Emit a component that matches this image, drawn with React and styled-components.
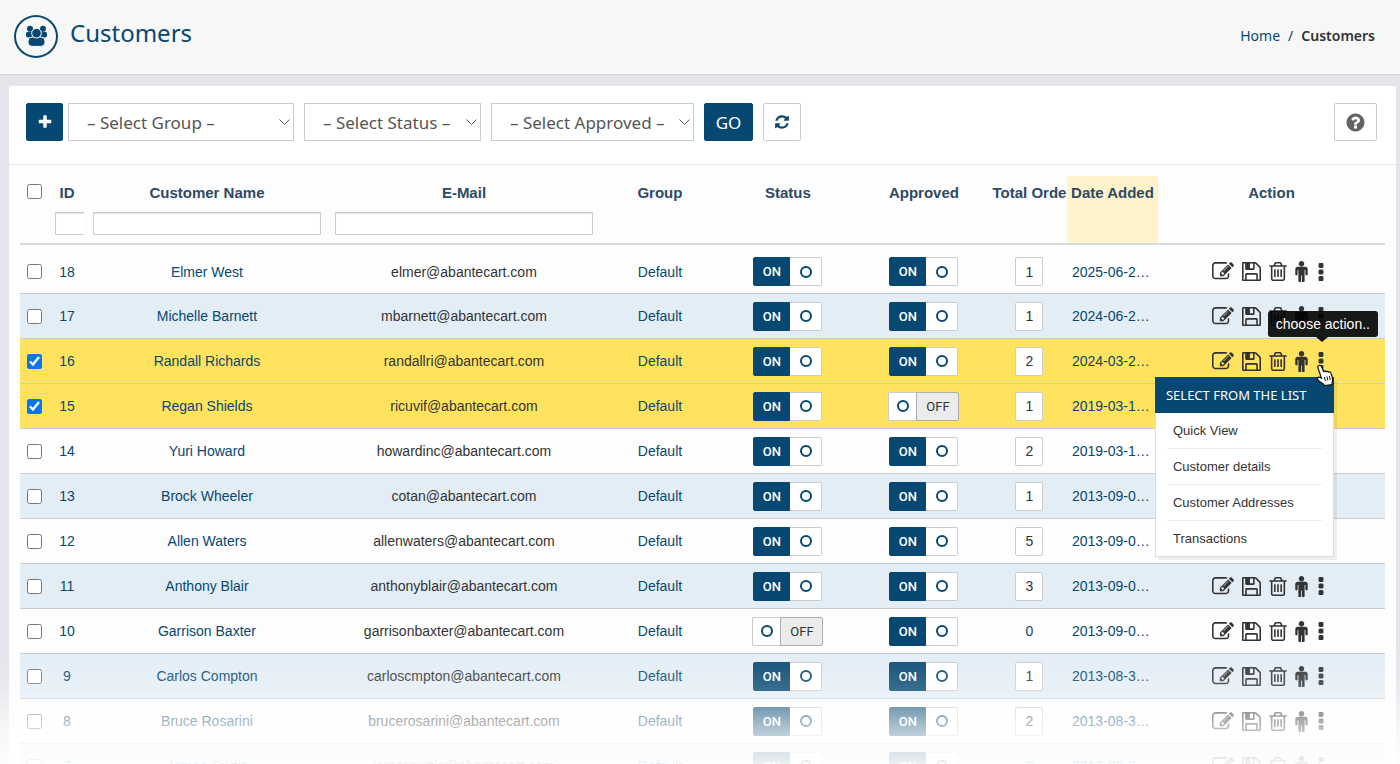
import styled, { createGlobalStyle } from "styled-components";

const uiFont = `"Noto Sans", "Open Sans", sans-serif`;
const tableFont = `"Liberation Sans", Arial, sans-serif`;

const GlobalStyle = createGlobalStyle`
  *, *::before {
    box-sizing: border-box;
  }

  body {
    margin: 0;
    background-color: #e4e5ea;
    color: #333;
    font-family: ${uiFont};
    font-size: 14px;
  }

  button, input, select {
    font: inherit;
    margin: 0;
  }

  a {
    color: #064871;
    text-decoration: none;
  }
`;

const Page = styled.div`
  position: relative;
  height: 100vh;
  overflow: hidden;
`;

const PageFade = styled.div`
  position: absolute;
  left: 0;
  right: 0;
  bottom: 0;
  height: 120px;
  pointer-events: none;
  background: linear-gradient(
    to bottom,
    rgba(255, 255, 255, 0),
    rgba(255, 255, 255, 0.2) 38%,
    rgba(255, 255, 255, 0.44) 52%,
    rgba(255, 255, 255, 0.74) 76%,
    rgba(255, 255, 255, 0.92)
  );
`;

const PageHeader = styled.header`
  height: 75px;
  padding: 0 25px 2px 14px;
  display: flex;
  align-items: center;
  background-color: #f7f7f7;
  border-bottom: 1px solid #d3d5da;
`;

const HeaderIcon = styled.span`
  width: 44px;
  height: 43px;
  display: flex;
  align-items: center;
  justify-content: center;
  color: #064871;
  border: 2px solid #064871;
  border-radius: 50%;
`;

const PageTitle = styled.h1`
  margin: 0 auto 6px 12px;
  color: #064871;
  font-size: 24px;
  font-weight: 400;
  line-height: 32px;
`;

const Breadcrumb = styled.nav`
  display: flex;
  gap: 8px;
  color: #064871;
  font-size: 14px;
  line-height: 20px;
`;

const Crumb = styled.span`
  color: #333;
  font-weight: 600;
`;

const Panel = styled.main`
  margin: 11px 4px 0 9px;
  background-color: #fdfdfd;
  border-radius: 3px;
`;

const Toolbar = styled.form`
  height: 79px;
  padding: 17px 19px 0 17px;
  display: flex;
  align-items: flex-start;
  gap: 10px;
  background-color: #fff;
  border-bottom: 1px solid #eaeaec;
  border-radius: 3px 3px 0 0;
`;

const ToolbarGroup = styled.div`
  display: flex;
  gap: 5px;
`;

const ToolbarButton = styled.button`
  width: ${(props) => props.$width}px;
  height: 38px;
  padding: 0;
  display: flex;
  align-items: center;
  justify-content: center;
  color: ${(props) => (props.$primary ? "#fff" : props.$muted ? "#636363" : "#064871")};
  background-color: ${(props) => (props.$primary ? "#064871" : "#fff")};
  border: 1px solid ${(props) => (props.$primary ? "#064871" : "#ccc")};
  border-radius: 2px;
  font-size: 17px;
  margin-left: ${(props) => (props.$end ? "auto" : "0")};
`;

const SelectBox = styled.div`
  position: relative;
  width: ${(props) => props.$width}px;

  svg {
    position: absolute;
    right: 4px;
    top: 16px;
    pointer-events: none;
  }
`;

const FilterSelect = styled.select`
  width: 100%;
  height: 38px;
  padding: 0 18px;
  appearance: none;
  color: #555;
  background-color: #fff;
  border: 1px solid #ccc;
  border-radius: 0;
  font-size: 17px;
`;

const TableArea = styled.div`
  padding: 11px 11px 0;
`;

const Grid = styled.table`
  width: 100%;
  table-layout: fixed;
  border-collapse: separate;
  border-spacing: 0;
  font-family: ${tableFont};
  font-size: 14px;
`;

const HeadCell = styled.th`
  height: 69px;
  padding: ${(props) => (props.$check ? "8px 0 0 7px" : props.$tight ? "6px 0 0" : "6px 2px 0")};
  vertical-align: top;
  text-align: ${(props) => (props.$check ? "left" : "center")};
  color: #2d4a66;
  border-bottom: 2px solid #d9dadc;
  font-size: 15px;
  line-height: 22px;
  white-space: nowrap;
  overflow: hidden;
  background-color: ${(props) => (props.$sorted ? "#fff3cc" : "transparent")};
`;

const FilterBox = styled.div`
  margin-top: 8px;
  padding-left: 5px;
  padding-right: ${(props) => (props.$clipped ? 0 : 5)}px;
  overflow: hidden;
`;

const FilterInput = styled.input`
  display: block;
  width: ${(props) => (props.$clipped ? "60px" : "100%")};
  height: 23px;
  padding: 0 4px;
  background-color: #fff;
  border: 1px solid #ccc;
  box-shadow: inset 0 1px 1px rgba(0, 0, 0, 0.12);
  font-size: 13px;
`;

const TableBody = styled.tbody`
  tr:first-child td {
    height: 49px;
    padding-top: 5px;
  }
`;

const rowColors = { plain: "#fdfdfd", striped: "#e3edf6", selected: "#ffe35e" };

const Row = styled.tr`
  background-color: ${(props) => rowColors[props.$tone]};
`;

const Cell = styled.td`
  height: 45px;
  padding: ${(props) => (props.$check ? "0 0 0 7px" : "0 5px")};
  border-bottom: 1px solid #c9ccd3;
  text-align: ${(props) => (props.$left ? "left" : "center")};
  white-space: nowrap;
  color: ${(props) => (props.$date ? "#064871" : "#333")};
`;

const Checkbox = styled.input`
  display: block;
  width: 15px;
  height: 15px;
  accent-color: #0a75f0;
`;

const Switch = styled.button`
  height: 29px;
  padding: 0;
  display: inline-flex;
  vertical-align: middle;
  background: none;
  border: 0;
  font-family: Roboto, ${tableFont};
  font-size: 13px;
`;

const SwitchLabel = styled.span`
  width: ${(props) => (props.$on ? 37 : 43)}px;
  height: 29px;
  display: flex;
  align-items: center;
  justify-content: center;
  color: ${(props) => (props.$on ? "#fff" : "#333")};
  background-color: ${(props) => (props.$on ? "#064871" : "#ebebeb")};
  border: 1px solid ${(props) => (props.$on ? "#064871" : "#adadad")};
  border-radius: ${(props) => (props.$on ? "2px 0 0 2px" : "0 2px 2px 0")};
  font-weight: ${(props) => (props.$on ? 500 : 400)};
`;

const SwitchKnob = styled.span`
  width: ${(props) => (props.$on ? 32 : 28)}px;
  height: 29px;
  display: flex;
  align-items: center;
  justify-content: center;
  background-color: #fff;
  border: 1px solid #ccc;
  border-left-width: ${(props) => (props.$on ? 0 : 1)}px;
  border-right-width: ${(props) => (props.$on ? 1 : 0)}px;
  border-radius: ${(props) => (props.$on ? "0 2px 2px 0" : "2px 0 0 2px")};

  &::before {
    content: "";
    width: 12px;
    height: 12px;
    border: 2px solid #064871;
    border-radius: 50%;
  }
`;

const OrderLink = styled.a`
  width: 28px;
  height: 29px;
  display: inline-flex;
  align-items: center;
  justify-content: center;
  vertical-align: middle;
  color: #333;
  background-color: #fff;
  border: 1px solid #ccc;
  border-radius: 2px;
`;

const Actions = styled.div`
  display: flex;
  align-items: center;
  justify-content: center;
  gap: 8px;
  padding-right: 5px;
`;

const ActionButton = styled.button`
  padding: 0;
  display: flex;
  background: none;
  border: 0;
  color: #333;
`;

const MoreBox = styled.div`
  position: relative;
`;

const Tooltip = styled.div`
  position: absolute;
  z-index: 3;
  right: -52px;
  bottom: 33px;
  padding: 0 8px;
  border-radius: 3px;
  color: #fff;
  background-color: rgba(0, 0, 0, 0.9);
  font-size: 14px;
  line-height: 26px;

  &::after {
    content: "";
    position: absolute;
    top: 100%;
    right: 50px;
    border: 6px solid transparent;
    border-top: 5px solid rgba(0, 0, 0, 0.9);
    border-bottom: 0;
  }
`;

const Menu = styled.div`
  position: absolute;
  z-index: 2;
  top: 25px;
  right: -8px;
  width: 179px;
  background-color: #fff;
  border: 1px solid #ddd;
  border-top: 0;
  box-shadow: 3px 3px 0 rgba(0, 0, 0, 0.06);
  text-align: left;
`;

const MenuTitle = styled.h5`
  margin: 0 -1px;
  padding: 0 11px;
  color: #fff;
  background-color: #064871;
  font-family: ${uiFont};
  font-size: 13px;
  font-weight: 400;
  line-height: 36px;
`;

const MenuList = styled.ul`
  margin: 0;
  padding: 0 11px;
  list-style: none;
  font-size: 13px;
`;

const MenuItem = styled.li`
  padding-left: 6px;
  line-height: 35px;
  border-bottom: 1px solid #eee;

  &:last-child {
    border-bottom: 0;
  }

  a {
    color: #333;
  }
`;

const Pointer = styled.svg`
  position: absolute;
  z-index: 4;
  top: 12px;
  left: 0;
`;

// Outlines on the 1792 unit icon grid
const icons = {
  plus: {
    box: "0 0 1792 1792",
    d: "M1600 736v192q0 40-28 68t-68 28h-416v416q0 40-28 68t-68 28h-192q-40 0-68-28t-28-68v-416h-416q-40 0-68-28t-28-68v-192q0-40 28-68t68-28h416v-416q0-40 28-68t68-28h192q40 0 68 28t28 68v416h416q40 0 68 28t28 68z",
  },
  refresh: {
    box: "0 0 1792 1792",
    d: "M1639 1056q0 5-1 7-64 268-268 434.5t-478 166.5q-146 0-282.5-55t-243.5-157l-129 129q-19 19-45 19t-45-19-19-45v-448q0-26 19-45t45-19h448q26 0 45 19t19 45-19 45l-137 137q71 66 161 102t187 36q134 0 250-65t186-179q11-17 53-117 8-23 30-23h192q13 0 22.5 9.5t9.5 22.5zm25-800v448q0 26-19 45t-45 19h-448q-26 0-45-19t-19-45 19-45l138-138q-148-137-349-137-134 0-250 65t-186 179q-11 17-53 117-8 23-30 23h-199q-13 0-22.5-9.5t-9.5-22.5v-7q65-268 270-434.5t480-166.5q146 0 284 55.5t245 156.5l130-129q19-19 45-19t45 19 19 45z",
  },
  question: {
    box: "0 0 1792 1792",
    d: "M1024 1376v-192q0-14-9-23t-23-9h-192q-14 0-23 9t-9 23v192q0 14 9 23t23 9h192q14 0 23-9t9-23zm256-672q0-88-55.5-163t-138.5-116-170-41q-243 0-371 213-15 24 8 42l132 100q7 6 19 6 16 0 25-12 53-68 86-92 34-24 86-24 48 0 85.5 26t37.5 59q0 38-20 61t-68 45q-63 28-115.5 86.5t-52.5 125.5v36q0 14 9 23t23 9h192q14 0 23-9t9-23q0-19 21.5-49.5t54.5-49.5q32-18 49-28.5t46-35 44.5-48 28-60.5 12.5-81zm384 192q0 209-103 385.5t-279.5 279.5-385.5 103-385.5-103-279.5-279.5-103-385.5 103-385.5 279.5-279.5 385.5-103 385.5 103 279.5 279.5 103 385.5z",
  },
  edit: {
    box: "0 128 1792 1536",
    d: "M888 1184l116-116-152-152-116 116v56h96v96h56zm440-720q-16-16-33 1l-350 350q-17 17-1 33t33-1l350-350q17-17 1-33zm80 594v190q0 119-84.5 203.5t-203.5 84.5h-832q-119 0-203.5-84.5t-84.5-203.5v-832q0-119 84.5-203.5t203.5-84.5h832q63 0 117 25 15 7 18 23 3 17-9 29l-49 49q-14 14-32 8-23-6-45-6h-832q-66 0-113 47t-47 113v832q0 66 47 113t113 47h832q66 0 113-47t47-113v-126q0-13 9-22l64-64q15-15 35-7t20 29zm-96-738l288 288-672 672h-288v-288zm444 132l-92 92-288-288 92-92q28-28 68-28t68 28l152 152q28 28 28 68t-28 68z",
  },
  save: {
    box: "128 128 1536 1536",
    d: "M512 1536h768v-384h-768v384zm896 0h128v-896q0-14-10-38.5t-20-34.5l-281-281q-10-10-34-20t-39-10v416q0 40-28 68t-68 28h-576q-40 0-68-28t-28-68v-416h-128v1280h128v-416q0-40 28-68t68-28h832q40 0 68 28t28 68v416zm-384-928v-320q0-13-9.5-22.5t-22.5-9.5h-192q-13 0-22.5 9.5t-9.5 22.5v320q0 13 9.5 22.5t22.5 9.5h192q13 0 22.5-9.5t9.5-22.5zm640 32v928q0 40-28 68t-68 28h-1344q-40 0-68-28t-28-68v-1344q0-40 28-68t68-28h928q40 0 88 20t76 48l280 280q28 28 48 76t20 88z",
  },
  trash: {
    box: "192 128 1408 1536",
    d: "M704 736v576q0 14-9 23t-23 9h-64q-14 0-23-9t-9-23v-576q0-14 9-23t23-9h64q14 0 23 9t9 23zm256 0v576q0 14-9 23t-23 9h-64q-14 0-23-9t-9-23v-576q0-14 9-23t23-9h64q14 0 23 9t9 23zm256 0v576q0 14-9 23t-23 9h-64q-14 0-23-9t-9-23v-576q0-14 9-23t23-9h64q14 0 23 9t9 23zm128 724v-948h-896v948q0 22 7 40.5t14.5 27 10.5 8.5h832q3 0 10.5-8.5t14.5-27 7-40.5zm-672-1076h448l-48-117q-7-9-17-11h-317q-10 2-17 11zm928 32v64q0 14-9 23t-23 9h-96v948q0 83-47 143.5t-113 60.5h-832q-66 0-113-58.5t-47-141.5v-952h-96q-14 0-23-9t-9-23v-64q0-14 9-23t23-9h309l70-167q15-37 54-63t79-26h320q40 0 79 26t54 63l70 167h309q14 0 23 9t9 23z",
  },
  male: {
    box: "256 64 1024 1728",
    d: "M1280 736v416q0 40-28 68t-68 28-68-28-28-68v-352h-64v912q0 46-33 79t-79 33-79-33-33-79v-464h-64v464q0 46-33 79t-79 33-79-33-33-79v-912h-64v352q0 40-28 68t-68 28-68-28-28-68v-416q0-80 56-136t136-56h640q80 0 136 56t56 136zm-288-448q0 93-65.5 158.5t-158.5 65.5-158.5-65.5-65.5-158.5 65.5-158.5 158.5-65.5 158.5 65.5 65.5 158.5z",
  },
  more: {
    box: "704 128 384 1408",
    d: "M1088 1248v192q0 40-28 68t-68 28h-192q-40 0-68-28t-28-68v-192q0-40 28-68t68-28h192q40 0 68 28t28 68zm0-512v192q0 40-28 68t-68 28h-192q-40 0-68-28t-28-68v-192q0-40 28-68t68-28h192q40 0 68 28t28 68zm0-512v192q0 40-28 68t-68 28h-192q-40 0-68-28t-28-68v-192q0-40 28-68t68-28h192q40 0 68 28t28 68z",
  },
};

function Icon({ name, width, height }) {
  return (
    <svg width={width} height={height} viewBox={icons[name].box} fill="currentColor" aria-hidden="true">
      <path d={icons[name].d} />
    </svg>
  );
}

function UsersIcon() {
  return (
    <svg width="23" height="22" viewBox="0 0 23 22" fill="currentColor" aria-hidden="true">
      <circle cx="5" cy="3.7" r="3" />
      <circle cx="18" cy="3.7" r="3" />
      <rect x="1" y="6.8" width="7" height="5.7" rx="2" />
      <rect x="15" y="6.8" width="7" height="5.7" rx="2" />
      <rect x="3" y="12" width="17" height="9.4" rx="4" stroke="#f7f7f7" />
      <circle cx="11.5" cy="8.2" r="4.8" stroke="#f7f7f7" />
    </svg>
  );
}

function Chevron() {
  return (
    <svg width="11" height="7" viewBox="0 0 11 7" fill="none" stroke="#555" aria-hidden="true">
      <path d="M.5.5l5 5 5-5" />
    </svg>
  );
}

const filters = [
  { label: "Select Group", width: 226 },
  { label: "Select Status", width: 177 },
  { label: "Select Approved", width: 203 },
];

const columnWidths = [28, 38, 242, 272, 120, 136, 136, 75, 91, 227];

const columns = [
  { label: "ID", filter: true, clipped: true },
  { label: "Customer Name", filter: true },
  { label: "E-Mail", filter: true },
  { label: "Group" },
  { label: "Status" },
  { label: "Approved" },
  { label: "Total Orde", tight: true },
  { label: "Date Added", sorted: true },
  { label: "Action" },
];

const customers = [
  { id: 18, name: "Elmer West", email: "elmer", status: true, approved: true, orders: 1, date: "2025-06-2…" },
  { id: 17, name: "Michelle Barnett", email: "mbarnett", status: true, approved: true, orders: 1, date: "2024-06-2…" },
  { id: 16, name: "Randall Richards", email: "randallri", status: true, approved: true, orders: 2, date: "2024-03-2…", selected: true, open: true },
  { id: 15, name: "Regan Shields", email: "ricuvif", status: true, approved: false, orders: 1, date: "2019-03-1…", selected: true },
  { id: 14, name: "Yuri Howard", email: "howardinc", status: true, approved: true, orders: 2, date: "2019-03-1…" },
  { id: 13, name: "Brock Wheeler", email: "cotan", status: true, approved: true, orders: 1, date: "2013-09-0…" },
  { id: 12, name: "Allen Waters", email: "allenwaters", status: true, approved: true, orders: 5, date: "2013-09-0…" },
  { id: 11, name: "Anthony Blair", email: "anthonyblair", status: true, approved: true, orders: 3, date: "2013-09-0…" },
  { id: 10, name: "Garrison Baxter", email: "garrisonbaxter", status: false, approved: true, orders: 0, date: "2013-09-0…" },
  { id: 9, name: "Carlos Compton", email: "carloscmpton", status: true, approved: true, orders: 1, date: "2013-08-3…" },
  { id: 8, name: "Bruce Rosarini", email: "brucerosarini", status: true, approved: true, orders: 2, date: "2013-08-3…" },
  { id: 7, name: "James Curtis", email: "jamescurtis", status: true, approved: true, orders: 0, date: "2013-08-3…" },
];

const menuItems = ["Quick View", "Customer details", "Customer Addresses", "Transactions"];

function Toggle({ on, label }) {
  return (
    <Switch type="button" role="switch" aria-checked={on} aria-label={label}>
      {on && <SwitchLabel $on>ON</SwitchLabel>}
      <SwitchKnob $on={on} />
      {!on && <SwitchLabel>OFF</SwitchLabel>}
    </Switch>
  );
}

function ActionMenu() {
  return (
    <>
      <Tooltip role="tooltip">choose action..</Tooltip>
      <Menu>
        <MenuTitle>SELECT FROM THE LIST</MenuTitle>
        <MenuList>
          {menuItems.map((item) => (
            <MenuItem key={item}>
              <a href="#">{item}</a>
            </MenuItem>
          ))}
        </MenuList>
      </Menu>
      <Pointer width="18" height="22" viewBox="0 0 18 22" aria-hidden="true">
        <path
          d="M3 1.500c1-.5 2 0 2.400 1l2.200 5c.7-.8 1.900-.7 2.400.2.800-.7 2-.5 2.500.4 1-.6 2.200-.1 2.500 1 .9 2.600 2 5 1.500 7.500l-.6 3.900-7.400 1c-1.400-2-4.700-3.300-6.800-5.900-.8-1-.2-2.500 1.200-2.500.9 0 1.700.6 2.500 1L2 4c-.4-1 0-2.100 1-2.500z"
          fill="#fff"
          stroke="#111"
          strokeWidth="1.2"
        />
        <path d="M8.500 13l.8 4M11 12.500l.8 4M13.500 12l.7 4" stroke="#111" />
      </Pointer>
    </>
  );
}

function CustomerRow({ customer, striped }) {
  const tone = customer.selected ? "selected" : striped ? "striped" : "plain";

  return (
    <Row $tone={tone}>
      <Cell $check $left>
        <Checkbox type="checkbox" defaultChecked={customer.selected} aria-label={`Select ${customer.name}`} />
      </Cell>
      <Cell>
        <a href="#">{customer.id}</a>
      </Cell>
      <Cell>
        <a href="#">{customer.name}</a>
      </Cell>
      <Cell>{customer.email}@abantecart.com</Cell>
      <Cell>
        <a href="#">Default</a>
      </Cell>
      <Cell>
        <Toggle on={customer.status} label="Status" />
      </Cell>
      <Cell>
        <Toggle on={customer.approved} label="Approved" />
      </Cell>
      <Cell>
        {customer.orders > 0 ? <OrderLink href="#">{customer.orders}</OrderLink> : <a href="#">0</a>}
      </Cell>
      <Cell $left $date>
        {customer.date}
      </Cell>
      <Cell>
        <Actions>
          <ActionButton type="button" aria-label="Edit">
            <Icon name="edit" width={22} height={19} />
          </ActionButton>
          <ActionButton type="button" aria-label="Save">
            <Icon name="save" width={19} height={19} />
          </ActionButton>
          <ActionButton type="button" aria-label="Delete">
            <Icon name="trash" width={18} height={19} />
          </ActionButton>
          <ActionButton type="button" aria-label="Log in as customer">
            <Icon name="male" width={13} height={21} />
          </ActionButton>
          <MoreBox>
            <ActionButton type="button" aria-label="Choose action">
              <Icon name="more" width={10} height={18} />
            </ActionButton>
            {customer.open && <ActionMenu />}
          </MoreBox>
        </Actions>
      </Cell>
    </Row>
  );
}

function FilterField({ label, width }) {
  return (
    <SelectBox $width={width}>
      <FilterSelect aria-label={label}>
        <option>– {label} –</option>
      </FilterSelect>
      <Chevron />
    </SelectBox>
  );
}

function App() {
  const [groupFilter, ...otherFilters] = filters;

  return (
    <Page>
      <GlobalStyle />
      <PageHeader>
        <HeaderIcon>
          <UsersIcon />
        </HeaderIcon>
        <PageTitle>Customers</PageTitle>
        <Breadcrumb>
          <a href="#">Home</a>
          <span>/</span>
          <Crumb>Customers</Crumb>
        </Breadcrumb>
      </PageHeader>
      <Panel>
        <Toolbar>
          <ToolbarGroup>
            <ToolbarButton type="button" $primary $width={37} aria-label="Add customer">
              <Icon name="plus" width={16} height={16} />
            </ToolbarButton>
            <FilterField {...groupFilter} />
          </ToolbarGroup>
          {otherFilters.map((filter) => (
            <FilterField key={filter.label} {...filter} />
          ))}
          <ToolbarButton type="button" $primary $width={49}>
            GO
          </ToolbarButton>
          <ToolbarButton type="button" $width={38} aria-label="Refresh">
            <Icon name="refresh" width={16} height={16} />
          </ToolbarButton>
          <ToolbarButton type="button" $muted $end $width={43} aria-label="Help">
            <Icon name="question" width={21} height={21} />
          </ToolbarButton>
        </Toolbar>
        <TableArea>
          <Grid>
            <colgroup>
              {columnWidths.map((width, i) => (
                <col key={i} style={{ width: `${(width / 1365) * 100}%` }} />
              ))}
            </colgroup>
            <thead>
              <tr>
                <HeadCell $check>
                  <Checkbox type="checkbox" aria-label="Select all" />
                </HeadCell>
                {columns.map((column) => (
                  <HeadCell key={column.label} $sorted={column.sorted} $tight={column.tight}>
                    {column.label}
                    {column.filter && (
                      <FilterBox $clipped={column.clipped}>
                        <FilterInput $clipped={column.clipped} aria-label={column.label} />
                      </FilterBox>
                    )}
                  </HeadCell>
                ))}
              </tr>
            </thead>
            <TableBody>
              {customers.map((customer, i) => (
                <CustomerRow key={customer.id} customer={customer} striped={i % 2 === 1} />
              ))}
            </TableBody>
          </Grid>
        </TableArea>
      </Panel>
      <PageFade />
    </Page>
  );
}

export default App;
